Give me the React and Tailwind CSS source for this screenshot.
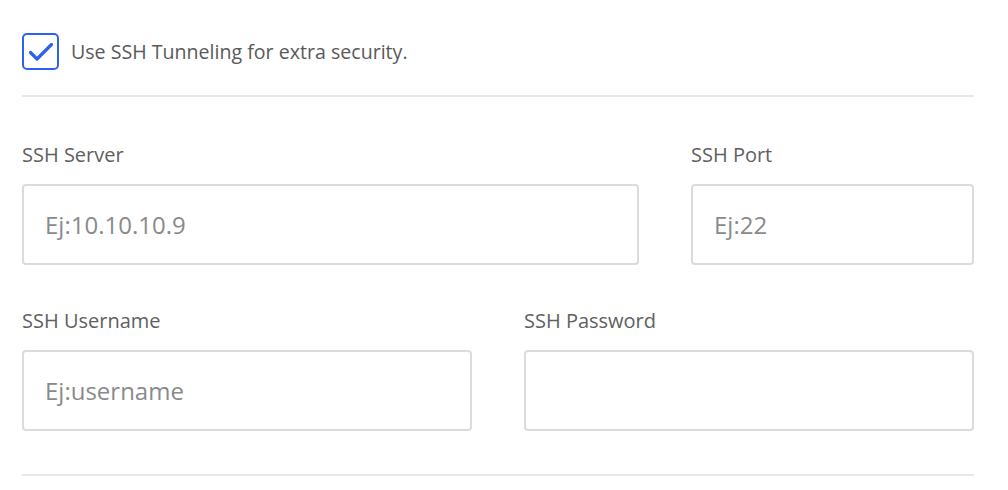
import React, { useState } from 'react';

const Field = ({ label, placeholder, type = 'text', className }) => (
  <div className={'flex flex-col ' + className}>
    <label className="text-[20px] leading-6 text-[#5f5f5f]">{label}</label>
    <input
      type={type}
      placeholder={placeholder}
      className="mt-[17px] h-[81px] w-full rounded-[4px] border-2 border-[#d9dbde] bg-white px-[21px] text-[24px] text-[#555] outline-none placeholder:text-[#8a8a8a]"
    />
  </div>
);

export default function App() {
  const [checked, setChecked] = useState(true);

  return (
    <div className="w-[1008px] h-[490px] bg-white px-[22px] pt-[33px] font-['Open_Sans',sans-serif] overflow-hidden">
      <label className="flex items-center gap-3 cursor-pointer" onClick={() => setChecked(!checked)}>
        <span className="flex h-[37px] w-[37px] items-center justify-center rounded-[5px] border-2 border-[#2d62f0] bg-white">
          {checked && (
            <svg viewBox="0 0 26 20" className="h-[20px] w-[26px]" fill="none" stroke="#2d62f0" strokeWidth="3.2" strokeLinecap="round" strokeLinejoin="round">
              <path d="M2.5 10.5l6.5 6.5L23.5 2.5" />
            </svg>
          )}
        </span>
        <span className="text-[19.6px] text-[#5a5a5a]">Use SSH Tunneling for extra security.</span>
      </label>

      <div className="mt-[25px] h-[2px] w-[952px] bg-[#e8e8e8]" />

      <div className="mt-[46px] flex gap-[52px] w-[952px]">
        <Field label="SSH Server" placeholder="Ej:10.10.10.9" className="w-[617px]" />
        <Field label="SSH Port" placeholder="Ej:22" className="w-[283px]" />
      </div>

      <div className="mt-[44px] flex gap-[52px] w-[952px]">
        <Field label="SSH Username" placeholder="Ej:username" className="w-[450px]" />
        <Field label="SSH Password" type="password" className="w-[450px]" />
      </div>

      <div className="mt-[43px] h-[2px] w-[952px] bg-[#e8e8e8]" />
    </div>
  );
}
